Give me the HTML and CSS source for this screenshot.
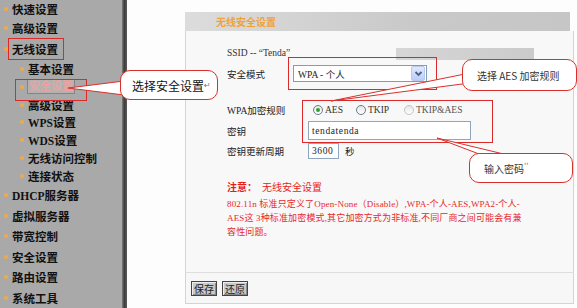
FILE: index.html
```html
<!DOCTYPE html>
<html>
<head>
	<meta charset="utf-8">
	<title>无线安全设置</title>
	<link rel="stylesheet" href="styles.css">
</head>
<body>
	<div class="page">
		<ul class="nav">
			<li>快速设置</li>
			<li>高级设置</li>
			<li>无线设置</li>
			<li class="sub">基本设置</li>
			<li class="sub"><span class="cur">安全设置</span></li>
			<li class="sub">高级设置</li>
			<li class="sub">WPS设置</li>
			<li class="sub">WDS设置</li>
			<li class="sub">无线访问控制</li>
			<li class="sub">连接状态</li>
			<li>DHCP服务器</li>
			<li>虚拟服务器</li>
			<li>带宽控制</li>
			<li>安全设置</li>
			<li>路由设置</li>
			<li>系统工具</li>
		</ul>
		<div class="divider"></div>

		<div class="main">
			<div class="panel">
				<div class="panel-head">无线安全设置</div>
				<div class="panel-body">
					<div class="row ssid">SSID -- “Tenda”</div>
					<div class="row mode">
						<span class="label">安全模式</span>
						<div class="select">
							<span>WPA - 个人</span>
							<span class="arrow">
								<svg width="11" height="11" viewBox="0 0 11 11"><path d="M2.5 4 L5.5 7 L8.5 4" fill="none" stroke="#4d6185" stroke-width="1.8"/></svg>
							</span>
						</div>
					</div>
					<div class="row rule">
						<span class="label">WPA加密规则</span>
						<span class="opt"><i class="radio on"></i>AES</span>
						<span class="opt"><i class="radio"></i>TKIP</span>
						<span class="opt"><i class="radio off"></i>TKIP&amp;AES</span>
					</div>
					<div class="row key">
						<span class="label">密钥</span>
						<div class="field wide">tendatenda</div>
					</div>
					<div class="row period">
						<span class="label">密钥更新周期</span>
						<div class="field short">3600</div>
						<span class="unit">秒</span>
					</div>

					<div class="note-title"><b>注意：</b>无线安全设置</div>
					<p class="note">802.11n 标准只定义了Open-None（Disable）,WPA-个人-AES,WPA2-个人-<br>AES这 3种标准加密模式,其它加密方式为非标准,不同厂商之间可能会有兼<br>容性问题。</p>
				</div>
				<div class="panel-foot">
					<button>保存</button>
					<button>还原</button>
				</div>
			</div>
		</div>

		<!-- annotations drawn over the screenshot -->
		<div class="notes">
			<div class="shade"></div>
			<div class="mark m1"></div>
			<div class="mark m2"></div>
			<div class="mark m3"></div>
			<div class="mark m4"></div>
			<svg class="wedges" width="577" height="308" viewBox="0 0 577 308">
				<polygon points="68,88 124,81 124,95" fill="#fff" stroke="#d9302c" stroke-width="1"/>
				<polygon points="331,101 470,73 470,83" fill="#fff" stroke="#d9302c" stroke-width="1"/>
				<polygon points="437,138 487,157 516,157" fill="#fff" stroke="#d9302c" stroke-width="1"/>
			</svg>
			<div class="bubble b1">选择安全设置<span class="ret">↵</span></div>
			<div class="bubble b2">选择 AES 加密规则</div>
			<div class="bubble b3">输入密码<span class="tick">''</span></div>
		</div>
	</div>
</body>
</html>
```

FILE: styles.css
```css
body {
	margin: 0;
	font-family: "Liberation Serif", "Noto Sans CJK SC", serif;
	font-size: 9.5px;
	color: #222;
}

.page {
	position: relative;
	width: 577px;
	height: 308px;
	display: flex;
	overflow: hidden;
	background: #fdfdfd;
}

/* left menu */
.nav {
	width: 122px;
	margin: 0;
	padding: 0;
	list-style: none;
	background: #a9a9a9;
}

.nav li {
	display: flex;
	align-items: center;
	height: 20.5px;
	padding-left: 12px;
	font-size: 11.5px;
	font-weight: bold;
	color: #111;
	white-space: nowrap;
}

.nav li::before {
	content: "";
	width: 4px;
	height: 4px;
	border-radius: 50%;
	background: #f2a84a;
	margin-left: -8px;
	margin-right: 4px;
	flex: none;
}

.nav li:nth-child(1) { height: 17px; }
.nav li:nth-child(2) { height: 21px; }
.nav li:nth-child(3) { height: 22px; }

.nav li.sub {
	height: 17.85px;
	padding-left: 28px;
}

.nav .cur {
	margin-left: -1px;
	padding: 0 1px;
	height: 13px;
	line-height: 13px;
	font-size: 11px;
	color: #eaa3a0;
	background: #b2b2b2;
	border: 1px solid #858585;
}

.divider {
	width: 5px;
	background: linear-gradient(to right, #808080, #3c3c3c 45%, #5a5a5a);
}

/* main panel */
.main {
	flex: 1;
	padding: 12px 0 0 58px;
}

.panel {
	width: 389px;
}

.panel-head {
	height: 19px;
	line-height: 19px;
	margin-right: 4px;
	padding-left: 31px;
	font-family: "Noto Sans CJK SC", sans-serif;
	font-size: 10px;
	font-weight: bold;
	color: #f0a238;
	background: linear-gradient(to right, #dcdcdc, #c9c9c9 60%, #c6c6c6);
}

.panel-body {
	height: 241px;
	box-sizing: border-box;
	padding: 15px 0 0 41px;
	border-left: 1px solid #d4d4d4;
	border-right: 1px solid #d4d4d4;
	background: #f8f8f8;
}

.row {
	display: flex;
	align-items: center;
	white-space: nowrap;
}

.label {
	flex: none;
}

.ssid {
	height: 14px;
	color: #333;
}

.mode {
	height: 17px;
	margin-top: 5px;
}

.mode .label {
	width: 66px;
}

.select {
	display: flex;
	align-items: center;
	justify-content: space-between;
	width: 134px;
	height: 17px;
	box-sizing: border-box;
	padding-left: 4px;
	border: 1px solid #7f9db9;
	background: #fff;
	color: #222;
}

.arrow {
	display: flex;
	align-items: center;
	justify-content: center;
	width: 12px;
	height: 13px;
	margin-right: 1px;
	border: 1px solid #b8c9ee;
	border-radius: 2px;
	background: linear-gradient(#e0e9fd, #bccdf6);
}

.rule {
	height: 14px;
	margin-top: 21px;
}

.rule .label {
	width: 86px;
}

.opt {
	display: flex;
	align-items: center;
	gap: 2px;
	width: 43px;
	color: #333;
}

.opt + .opt + .opt {
	width: auto;
	margin-left: 5px;
	color: #555;
}

.radio {
	display: inline-flex;
	align-items: center;
	justify-content: center;
	width: 10px;
	height: 10px;
	box-sizing: border-box;
	border-radius: 50%;
	border: 1px solid #6d7b8a;
	background: linear-gradient(#e6e6e6, #fff);
}

.radio.on::after {
	content: "";
	width: 4px;
	height: 4px;
	border-radius: 50%;
	background: #33a033;
}

.radio.off {
	border-color: #c4c4c4;
}

.key {
	height: 19px;
	margin-top: 4px;
}

.key .label,
.period .label {
	width: 81px;
}

.field {
	height: 100%;
	box-sizing: border-box;
	padding-left: 3px;
	border: 1px solid #8fa6bd;
	background: #fff;
	color: #222;
	display: flex;
	align-items: center;
	letter-spacing: 0.6px;
}

.field.wide {
	width: 163px;
}

.field.short {
	width: 31px;
}

.period {
	height: 16px;
	margin-top: 3px;
}

.unit {
	margin-left: 6px;
}

.note-title {
	height: 14px;
	line-height: 14px;
	margin-top: 22px;
	font-size: 10px;
	color: #e81c1c;
}

.note-title b {
	margin-right: 5px;
}

.note {
	margin: 2px 0 0;
	font-size: 9px;
	line-height: 14px;
	color: #e8282a;
	white-space: nowrap;
	letter-spacing: 0.15px;
}

.panel-foot {
	height: 32px;
	box-sizing: border-box;
	padding: 8px 0 0 5px;
	border: 1px solid #d4d4d4;
	border-top-color: #dedede;
	background: #f7f7f7;
	display: flex;
	gap: 5px;
	align-items: flex-start;
}

.panel-foot button {
	width: 26px;
	height: 15px;
	padding: 0;
	font-family: "Noto Sans CJK SC", sans-serif;
	font-size: 10px;
	line-height: 12px;
	color: #222;
	background: #c9c9c9;
	border: 1px solid #444;
	box-shadow: inset 1px 1px #eee, inset -1px -1px #8a8a8a;
}

/* annotations */
.notes {
	position: absolute;
	inset: 0;
	pointer-events: none;
}

.shade {
	position: absolute;
	left: 396px;
	top: 48px;
	width: 138px;
	height: 12px;
	background: linear-gradient(to right, #d6d6d6, #cbcbcb);
}

.mark {
	position: absolute;
	border: 1px solid #dc2a28;
}

.m1 { left: 8px; top: 38px; width: 54px; height: 20px; }
.m2 { left: 15px; top: 79px; width: 70px; height: 20px; }
.m3 { left: 288px; top: 57px; width: 147px; height: 31px; }
.m4 { left: 302px; top: 100px; width: 189px; height: 41px; }

.wedges {
	position: absolute;
	left: 0;
	top: 0;
}

.bubble {
	position: absolute;
	display: flex;
	align-items: center;
	box-sizing: border-box;
	border: 1px solid #d9302c;
	border-radius: 10px;
	background: #fff;
	font-family: "Noto Sans CJK SC", sans-serif;
	color: #111;
	white-space: nowrap;
}

.b1 {
	left: 120px;
	top: 70px;
	width: 98px;
	height: 30px;
	padding-left: 11px;
	font-size: 12px;
}

.ret {
	font-family: "DejaVu Sans", sans-serif;
	font-size: 8px;
	color: #777;
}

.b2 {
	left: 462px;
	top: 59px;
	width: 115px;
	height: 32px;
	padding-left: 14px;
	font-size: 10px;
	color: #333;
}

.b3 {
	left: 469px;
	top: 153px;
	width: 104px;
	height: 30px;
	padding-left: 14px;
	font-size: 10px;
	color: #333;
}

.tick {
	font-size: 8px;
	color: #777;
	margin-top: -5px;
}
```
